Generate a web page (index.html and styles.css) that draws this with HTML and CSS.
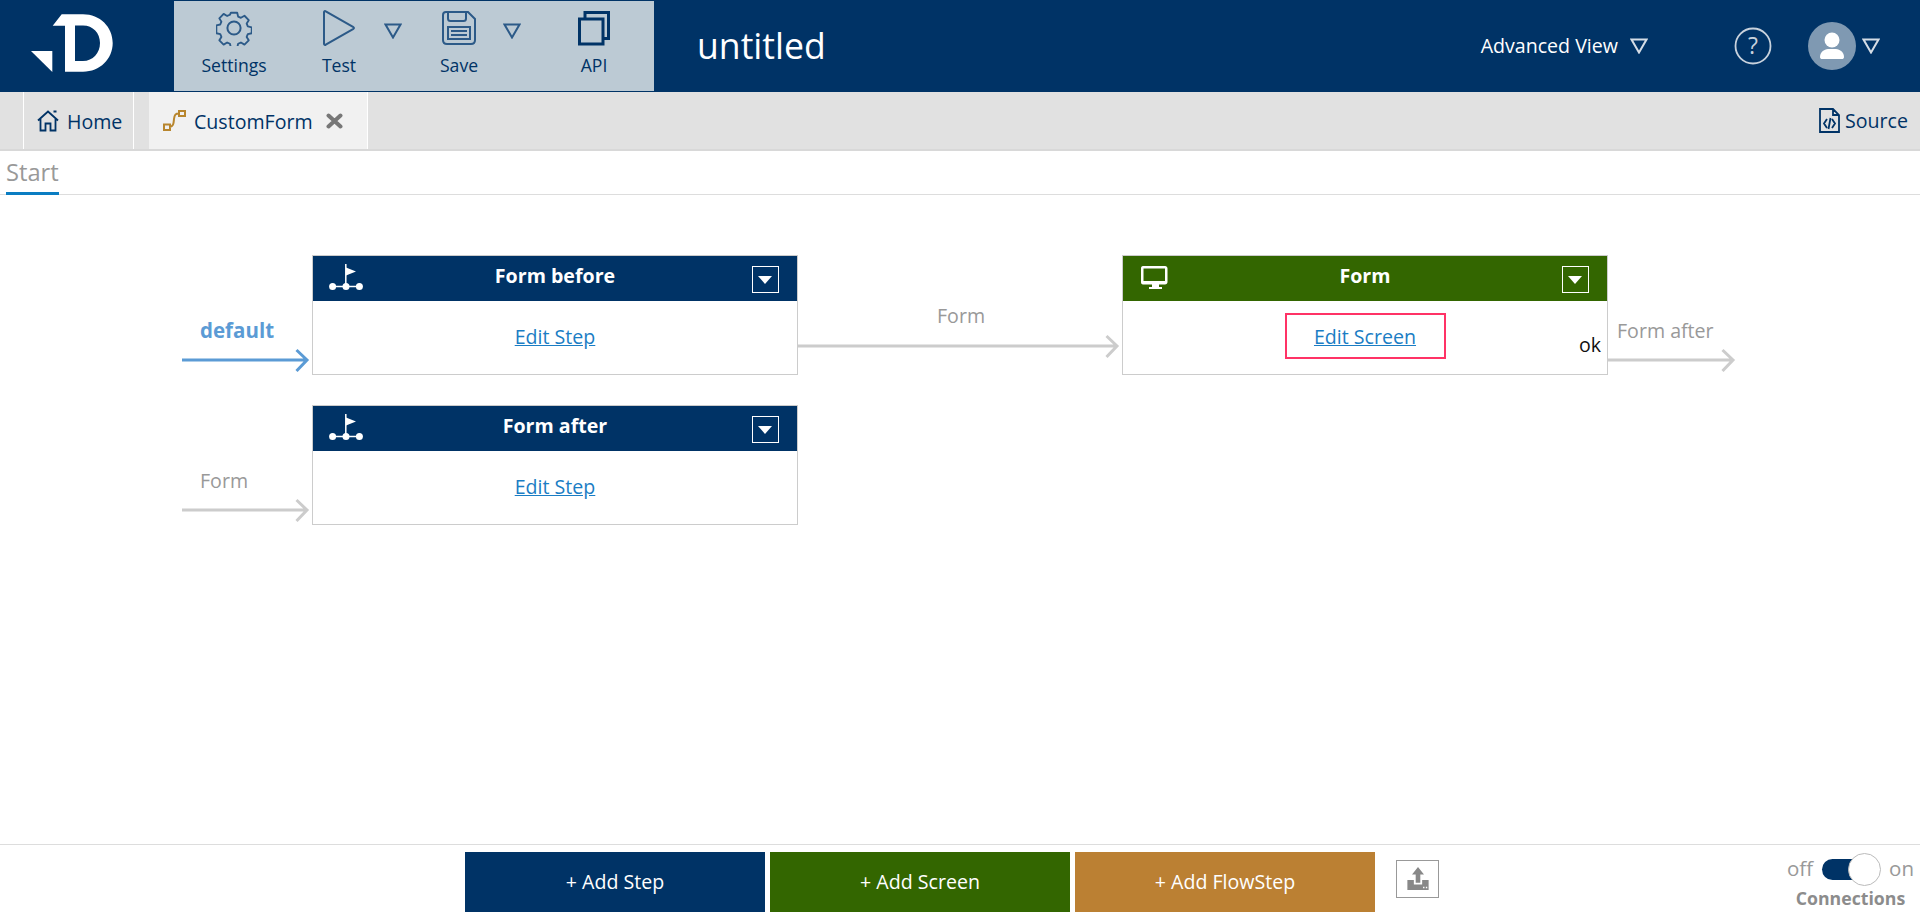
FILE: index.html
```html
<!DOCTYPE html>
<html lang="en">
<head>
<meta charset="UTF-8">
<meta name="viewport" content="width=device-width, initial-scale=1.0">
<title>CustomForm</title>
<link rel="stylesheet" href="styles.css">
</head>
<body>

<header class="topbar">
    <a class="logo">
        <svg width="146" height="92" viewBox="0 0 146 92">
            <path fill="#fff" d="M31 51H52.3V72Z"/>
            <path fill="#fff" fill-rule="evenodd" d="M52.7 25.7L61.7 14.3H83C100 14.3 112.7 27 112.7 43C112.7 59 100 71.7 83 71.7H65V25.7ZM75 25.5V61H83C93 61 100 53 100 43C100 33 93 25.5 83 25.5Z"/>
        </svg>
    </a>
    <nav class="toolbar">
        <div class="tool">
            <div class="tool-main">
                <svg class="tool-icon" width="36" height="36" viewBox="0 0 36 36">
                    <path class="ico-line" d="M14.6 1.5h6.8l1 4.2 3 1.3 3.8-2.2 4.6 4.8-2.2 3.6 1.2 3 4.2 1v6.4l-4.2 1-1.2 3 2.2 3.6-4.6 4.6-3.8-2.2-3 1.3-1 4.2h-6.8l-1-4.2-3-1.3-3.8 2.2-4.6-4.6 2.2-3.6-1.2-3-4.2-1V15.2l4.2-1 1.2-3-2.2-3.6 4.6-4.8 3.8 2.2 3-1.3z" transform="translate(1.3 1.3) scale(.93)" stroke-linejoin="round"/>
                    <circle class="ico-line" cx="18" cy="18" r="6.6"/>
                </svg>
                <span>Settings</span>
            </div>
        </div>
        <div class="tool">
            <div class="tool-main">
                <svg class="tool-icon" width="34" height="36" viewBox="0 0 34 36">
                    <path class="ico-line" d="M2 2.2C2 1 3 .8 3.800 1.400L31 16.800C32.300 17.600 32.300 18.400 31 19.200L3.800 34.600C3 35.200 2 35 2 33.800Z"/>
                </svg>
                <span>Test</span>
            </div>
            <svg class="tool-caret" width="18" height="16" viewBox="0 0 18 16"><path class="ico-line" d="M1.500 1.500H16.500L9 14.500Z"/></svg>
        </div>
        <div class="tool">
            <div class="tool-main">
                <svg class="tool-icon" width="34" height="34" viewBox="0 0 34 34">
                    <path class="ico-line" d="M4 1H26L33 8V29C33 31.500 31.500 33 29 33H5C2.500 33 1 31.500 1 29V4C1 2 2 1 4 1Z"/>
                    <path class="ico-line" d="M6 1V7.500C6 9 7 10 8.500 10H21.500C23 10 24 9 24 7.500V1"/>
                    <path class="ico-line" d="M6 16H28V28H6ZM9 20H25M9 24H25"/>
                </svg>
                <span>Save</span>
            </div>
            <svg class="tool-caret" width="18" height="16" viewBox="0 0 18 16"><path class="ico-line" d="M1.500 1.500H16.500L9 14.500Z"/></svg>
        </div>
        <div class="tool">
            <div class="tool-main tool-main-wide">
                <svg class="tool-icon" width="32" height="34" viewBox="0 0 32 34">
                    <path class="ico-dark" d="M7 7V1.500H30.500V27.500H25"/>
                    <path class="ico-dark" d="M1.500 8H25V33H1.500Z"/>
                </svg>
                <span>API</span>
            </div>
        </div>
    </nav>
    <div class="doc-title">untitled</div>
    <div class="topbar-right">
        <div class="view-switch">
            <span>Advanced View</span>
            <svg width="18" height="16" viewBox="0 0 18 16"><path class="ico-light" d="M1.500 1.500H16.500L9 14.500Z"/></svg>
        </div>
        <svg class="help" width="38" height="38" viewBox="0 0 38 38">
            <circle cx="19" cy="19" r="17.500" fill="none" stroke="#c8d2dd" stroke-width="1.800"/>
            <text x="19" y="27" text-anchor="middle">?</text>
        </svg>
        <div class="avatar">
            <svg width="28" height="30" viewBox="0 0 28 30">
                <circle cx="14" cy="9" r="7.500" fill="#fff"/>
                <path fill="#fff" d="M2 26C2 21 6 18.500 10 18H18C22 18.500 26 21 26 26C26 27.500 25 28 24 28H4C3 28 2 27.500 2 26Z"/>
            </svg>
        </div>
        <svg class="avatar-caret" width="18" height="16" viewBox="0 0 18 16"><path class="ico-light" d="M1.500 1.500H16.500L9 14.500Z"/></svg>
    </div>
</header>

<div class="tabbar">
    <div class="tab">
        <svg width="22" height="22" viewBox="0 0 22 22">
            <path class="ico-tab" d="M1 10.500L11 1.500L21 10.500M3.500 9V20.500H8.500V13.500H13.500V20.500H18.500V9M16.500 1.500L19.500 1.500"/>
        </svg>
        <span>Home</span>
    </div>
    <div class="tab tab-active">
        <svg width="23" height="21" viewBox="0 0 23 21">
            <path class="ico-gold" d="M1 14.500H7V20H1ZM16 1H22V6H16ZM7 17C10.500 16 10.500 14 11 9C11.500 4.500 12.500 3.500 16 3.500"/>
        </svg>
        <span>CustomForm</span>
        <svg class="tab-close" width="17" height="16" viewBox="0 0 17 16">
            <path d="M2.500 2.500L14.500 13.500M14.500 2.500L2.500 13.500" stroke="#777" stroke-width="4" stroke-linecap="round" fill="none"/>
        </svg>
    </div>
    <div class="source">
        <svg width="21" height="25" viewBox="0 0 21 25">
            <path class="ico-tab" d="M1 1H14L20 7V24H1ZM14 1V7H20M8 11L5 15.500L8 20M13 11L16 15.500L13 20M11.500 10L9.500 21" stroke-width="1.300"/>
        </svg>
        <span>Source</span>
    </div>
</div>

<div class="subtabs">
    <span class="subtab">Start</span>
</div>

<main class="canvas">
    <svg class="wires" width="1920" height="649" viewBox="0 195 1920 649">
        <g class="wire wire-default">
            <path d="M182 360H307M296.500 350L307 360L296.500 371"/>
        </g>
        <g class="wire">
            <path d="M182 510H307M296.500 500L307 510L296.500 521"/>
            <path d="M798 346H1117M1106.500 336L1117 346L1106.500 357"/>
            <path d="M1608 360H1733M1722.500 350L1733 360L1722.500 371"/>
        </g>
    </svg>

    <span class="wire-label wire-label-default label-default">default</span>
    <span class="wire-label label-form-in">Form</span>
    <span class="wire-label label-form-mid">Form</span>
    <span class="wire-label label-form-out">Form after</span>

    <div class="card card-before">
        <div class="card-head">
            <svg class="card-icon" width="34" height="27" viewBox="0 0 34 27">
                <path d="M3 22.500H31M16.800 22V0" stroke="#fff" stroke-width="1.500" fill="none"/>
                <path fill="#fff" d="M17 3.500L27 7.500L17 11.500Z"/>
                <circle cx="3.600" cy="22.500" r="3.500" fill="#fff"/><circle cx="17" cy="22.500" r="3.500" fill="#fff"/><circle cx="30.400" cy="22.500" r="3.500" fill="#fff"/>
            </svg>
            <span class="card-title">Form before</span>
            <span class="card-menu"></span>
        </div>
        <div class="card-body"><a class="card-link">Edit Step</a></div>
    </div>

    <div class="card card-after">
        <div class="card-head">
            <svg class="card-icon" width="34" height="27" viewBox="0 0 34 27">
                <path d="M3 22.500H31M16.800 22V0" stroke="#fff" stroke-width="1.500" fill="none"/>
                <path fill="#fff" d="M17 3.500L27 7.500L17 11.500Z"/>
                <circle cx="3.600" cy="22.500" r="3.500" fill="#fff"/><circle cx="17" cy="22.500" r="3.500" fill="#fff"/><circle cx="30.400" cy="22.500" r="3.500" fill="#fff"/>
            </svg>
            <span class="card-title">Form after</span>
            <span class="card-menu"></span>
        </div>
        <div class="card-body"><a class="card-link">Edit Step</a></div>
    </div>

    <div class="card card-form">
        <div class="card-head card-head-green">
            <svg class="card-icon" width="34" height="27" viewBox="0 0 34 27">
                <path fill="#fff" fill-rule="evenodd" d="M2 2H24C25.500 2 26.500 3 26.500 4.500V18C26.500 19.500 25.500 20.500 24 20.500H18V23H21V25H8V23H11V20.500H2C.5 20.500 0 19.500 0 18V4.500C0 3 .5 2 2 2ZM2.500 4.500V17H24V4.500Z"/>
            </svg>
            <span class="card-title">Form</span>
            <span class="card-menu"></span>
        </div>
        <div class="card-body">
            <div class="card-link-box"><a class="card-link">Edit Screen</a></div>
            <span class="card-ok">ok</span>
        </div>
    </div>
</main>

<footer class="footer">
    <button class="add-btn add-step">+ Add Step</button>
    <button class="add-btn add-screen">+ Add Screen</button>
    <button class="add-btn add-flow">+ Add FlowStep</button>
    <div class="upload">
        <svg width="22" height="24" viewBox="0 0 23 26">
            <path fill="#888" d="M11.500 0L18 8H14V17H9V8H5ZM0 14H7V19H16V14H23V25H0Z"/>
            <path fill="#fff" d="M17 21.500H18.500V23H17ZM20 21.500H21.500V23H20Z"/>
        </svg>
    </div>
    <div class="connections">
        <div class="toggle-row">
            <span>off</span>
            <div class="toggle"><span class="toggle-knob"></span></div>
            <span>on</span>
        </div>
        <div class="connections-label">Connections</div>
    </div>
</footer>

</body>
</html>
```

FILE: styles.css
```css
* {
    box-sizing: border-box;
}

html, body {
    height: 100%;
}

body {
    margin: 0;
    display: flex;
    flex-direction: column;
    overflow: hidden;
    background-color: #fff;
    font-family: "Open Sans", Arial, sans-serif;
    color: #003366;
}

svg {
    display: block;
    flex: none;
}

/* top bar */
.topbar {
    display: flex;
    height: 92px;
    background-color: #003366;
    color: #fff;
}

.logo {
    width: 174px;
}

.toolbar {
    display: flex;
    width: 480px;
    height: 90px;
    margin-top: 1px;
    background-color: #bccad4;
    color: #003366;
}

.tool {
    display: flex;
    width: 120px;
}

.tool-main {
    display: flex;
    flex-direction: column;
    align-items: center;
    width: 90px;
    font-size: 17.600px;
}

.tool:first-child .tool-main,
.tool-main-wide {
    width: 120px;
}

.tool-icon {
    height: 36px;
    margin-top: 9px;
    margin-bottom: 7px;
}

.tool-caret {
    margin-top: 22px;
}

.tool:nth-child(3) .tool-caret {
    margin-left: -1px;
}

.ico-line {
    fill: none;
    stroke: #2c5a88;
    stroke-width: 2;
}

.ico-dark {
    fill: none;
    stroke: #003366;
    stroke-width: 3;
}

.ico-light {
    fill: none;
    stroke: #d5dde6;
    stroke-width: 2;
}

.doc-title {
    margin-left: 43px;
    font-size: 35.600px;
    line-height: 90px;
}

.topbar-right {
    display: flex;
    align-items: center;
    margin-left: auto;
    padding-right: 40px;
}

.view-switch {
    display: flex;
    align-items: center;
    gap: 12px;
    font-size: 19.600px;
}

.view-switch span {
    margin-left: 1px;
    margin-top: -2px;
}

.help {
    margin-left: 86px;
}

.help text {
    font-family: "Open Sans", Arial, sans-serif;
    font-size: 23px;
    fill: #c8d2dd;
}

.avatar {
    display: flex;
    align-items: center;
    justify-content: center;
    width: 48px;
    height: 48px;
    margin-left: 36px;
    border-radius: 50%;
    background-color: #7f99b2;
}

.avatar-caret {
    margin-left: 6px;
}

/* tabs */
.tabbar {
    display: flex;
    align-items: stretch;
    height: 59px;
    padding-left: 23px;
    background-color: #e1e1e1;
    border-bottom: 2px solid #d8d8d8;
    font-size: 19.600px;
}

.tab {
    display: flex;
    align-items: center;
    width: 111px;
    padding-left: 13px;
    gap: 8px;
    border-left: 1px solid #fff;
    border-right: 1px solid #fff;
}

.tab span {
    margin-top: 1px;
}

.tab-active {
    width: 219px;
    margin-left: 15px;
    background-color: #f1f1f1;
    border-left: 0;
    padding-left: 14px;
}

.tab-close {
    margin-left: 5px;
}

.ico-tab {
    fill: none;
    stroke: #003366;
    stroke-width: 1.800;
}

.ico-gold {
    fill: none;
    stroke: #b8862e;
    stroke-width: 2;
}

.source {
    display: flex;
    align-items: center;
    gap: 5px;
    margin-left: auto;
    padding-right: 12px;
}

.subtabs {
    height: 44px;
    padding-left: 6px;
    border-bottom: 1px solid #ddd;
}

.subtab {
    display: inline-block;
    height: 44px;
    border-bottom: 3px solid #0a7dc2;
    font-size: 23.700px;
    line-height: 43px;
    color: #999;
}

/* diagram */
.canvas {
    position: relative;
    flex: 1;
}

.wires {
    position: absolute;
    left: 0;
    top: 0;
}

.wire path {
    fill: none;
    stroke: #ccc;
    stroke-width: 3;
}

.wire-default path {
    stroke: #5b9bd5;
}

.wire-label {
    position: absolute;
    font-size: 19.600px;
    line-height: 24px;
    color: #999;
}

.wire-label-default {
    font-size: 20.500px;
    font-weight: 700;
    color: #5b9bd5;
}

.label-default {
    left: 200px;
    top: 123px;
}

.label-form-in {
    left: 200px;
    top: 274px;
}

.label-form-mid {
    left: 937px;
    top: 109px;
}

.label-form-out {
    left: 1617px;
    top: 124px;
}

.card {
    position: absolute;
    width: 486px;
    height: 120px;
    border: 1px solid #ccc;
    background-color: #fff;
}

.card-before {
    left: 312px;
    top: 60px;
}

.card-after {
    left: 312px;
    top: 210px;
}

.card-form {
    left: 1122px;
    top: 60px;
}

.card-head {
    position: relative;
    display: flex;
    align-items: center;
    justify-content: center;
    height: 45px;
    background-color: #003366;
}

.card-head-green {
    background-color: #336600;
}

.card-icon {
    position: absolute;
    left: 16px;
    top: 8px;
}

.card-head-green .card-icon {
    left: 18px;
}

.card-title {
    margin-top: -7px;
    font-size: 19.600px;
    font-weight: 700;
    color: #fff;
}

.card-menu {
    position: absolute;
    right: 18px;
    top: 10px;
    width: 27px;
    height: 27px;
    border: 1px solid #fff;
}

.card-menu::after {
    content: "";
    position: absolute;
    left: 5px;
    top: 9px;
    border-left: 7.500px solid transparent;
    border-right: 7.500px solid transparent;
    border-top: 8px solid #fff;
}

.card-body {
    position: relative;
    display: flex;
    align-items: center;
    justify-content: center;
    height: 73px;
    padding-bottom: 2px;
}

.card-link {
    font-size: 19.600px;
    color: #1a7dc4;
    text-decoration: underline;
}

.card-link-box {
    display: flex;
    align-items: center;
    justify-content: center;
    width: 161px;
    height: 46px;
    margin-bottom: 2px;
    padding-top: 2px;
    border: 2px solid #ff3366;
}

.card-ok {
    position: absolute;
    right: 6px;
    top: 32px;
    font-size: 19.600px;
    line-height: 24px;
    color: #111;
}

/* footer */
.footer {
    display: flex;
    align-items: flex-start;
    height: 75px;
    padding: 7px 6px 0 465px;
    border-top: 1px solid #ddd;
}

.add-btn {
    width: 300px;
    height: 60px;
    margin-right: 5px;
    padding-bottom: 3px;
    border: 0;
    font-family: inherit;
    font-size: 19.600px;
    color: #fff;
}

.add-step {
    background-color: #003366;
}

.add-screen {
    background-color: #336600;
}

.add-flow {
    background-color: #bb8033;
}

.upload {
    display: flex;
    align-items: center;
    justify-content: center;
    width: 43px;
    height: 38px;
    margin-top: 8px;
    margin-left: 16px;
    border: 1px solid #999;
}

.connections {
    display: flex;
    flex-direction: column;
    align-items: center;
    margin-left: auto;
    color: #999;
}

.toggle-row {
    display: flex;
    align-items: center;
    height: 33px;
    gap: 9px;
    font-size: 20.500px;
    margin-top: 1px;
}

.toggle-row > span {
    margin-top: -4px;
}

.toggle {
    position: relative;
    width: 59px;
    height: 21px;
    margin-right: -1px;
}

.toggle::before {
    content: "";
    display: block;
    width: 48px;
    height: 21px;
    border-radius: 11px;
    background-color: #003366;
}

.toggle-knob {
    position: absolute;
    right: 0;
    top: -6px;
    width: 33px;
    height: 33px;
    border: 1px solid #bbb;
    border-radius: 50%;
    background-color: #fff;
}

.connections-label {
    font-size: 17.700px;
    line-height: 24px;
    font-weight: 700;
    color: #8c8c8c;
}
```
